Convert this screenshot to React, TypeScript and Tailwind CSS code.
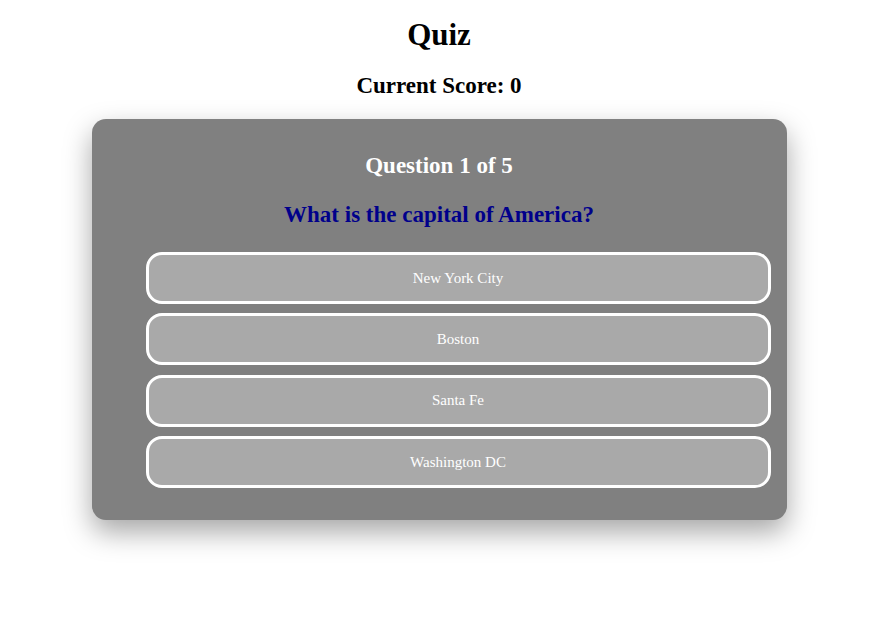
const options = ["New York City", "Boston", "Santa Fe", "Washington DC"];

export default function App() {
  return (
    <div className="min-h-[619px] bg-white text-center font-['Liberation_Serif','Times_New_Roman',serif] text-black">
      <h1 className="pt-[17px] text-[31px] font-bold leading-[36px]">Quiz</h1>
      <h2 className="mt-[19px] text-[23px] font-bold leading-[27px]">Current Score: 0</h2>
      <div className="mx-auto mt-[20px] w-[695px] rounded-[14px] bg-[#808080] pt-[33px] pb-[32px] shadow-[0_12px_28px_rgba(0,0,0,0.35)]">
        <h2 className="text-[23px] font-bold leading-[27px] text-white">Question 1 of 5</h2>
        <h3 className="mt-[22px] text-[23px] font-bold leading-[27px] text-[#00008b]">
          What is the capital of America?
        </h3>
        <div className="mt-[24px] flex flex-col gap-[9.3px] pl-[54px] pr-[16px]">
          {options.map((o) => (
            <button
              key={o}
              className="h-[52px] w-full rounded-[16px] border-[3px] border-white bg-[#a9a9a9] text-[15px] text-white"
            >
              {o}
            </button>
          ))}
        </div>
      </div>
    </div>
  );
}
